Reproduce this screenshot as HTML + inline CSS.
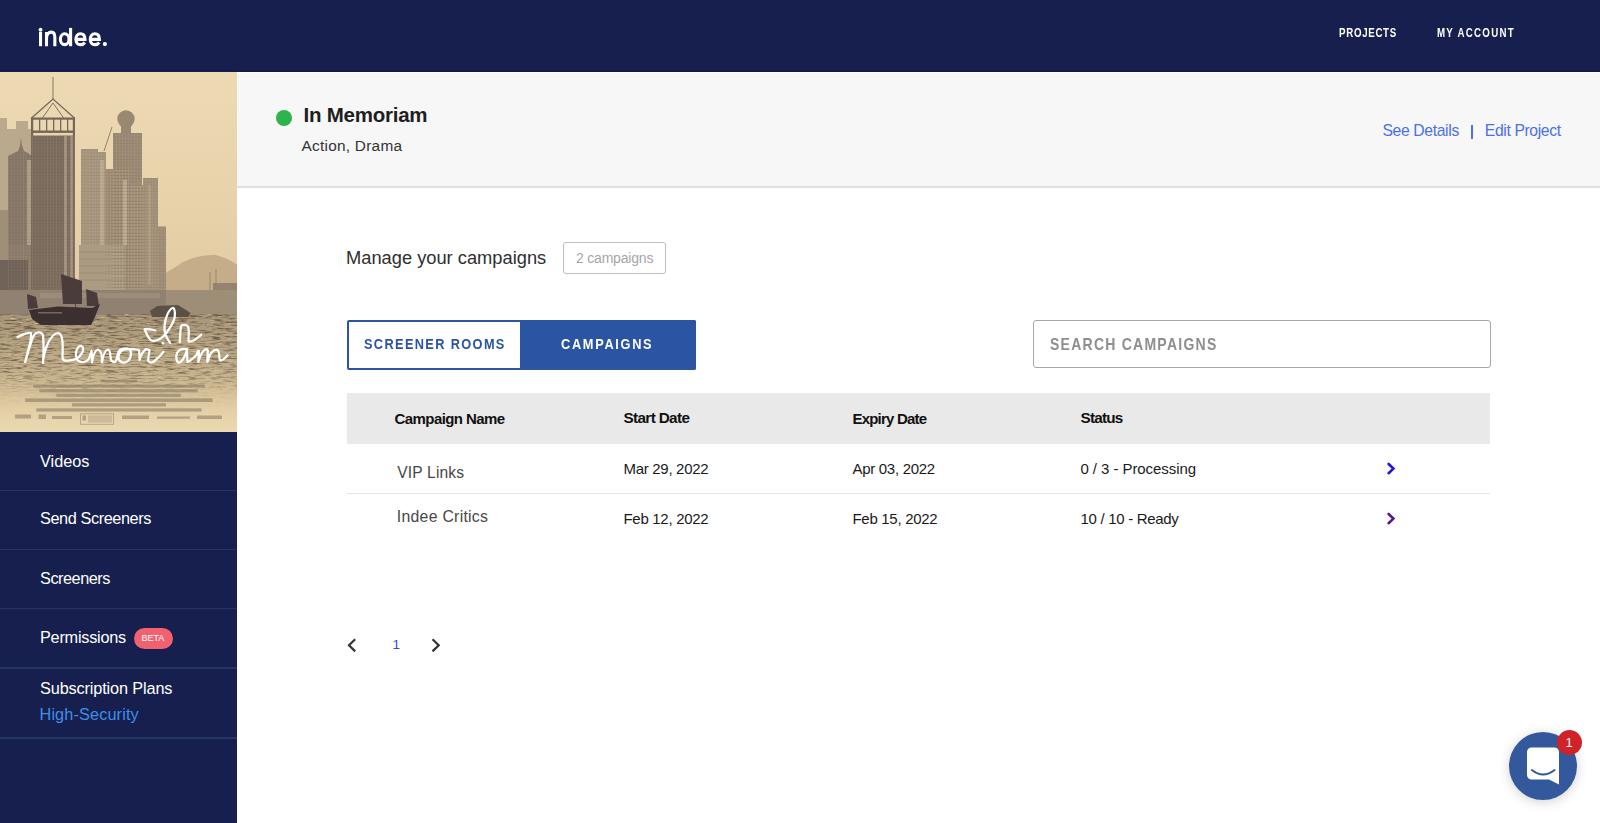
<!DOCTYPE html>
<html><head><meta charset="utf-8"><title>indee</title>
<style>
html,body{margin:0;padding:0;width:1600px;height:823px;overflow:hidden;background:#fff;font-family:"Liberation Sans",sans-serif;}
.t{position:absolute;white-space:nowrap;}
</style></head><body>
<div style="position:absolute;left:0;top:0;width:1600px;height:72px;background:#161f4d"></div>
<div style="position:absolute;left:0;top:70.2px;width:1600px;height:1.6px;background:#111b4a"></div>
<svg style="position:absolute;left:0;top:0" width="120" height="60"><g fill="none" stroke="#fff" stroke-width="3.1"><path d="M40.55 32 V46.2"/><path d="M46.5 46.2 V32 M46.5 38.5 C46.5 34.3 48.8 32.1 51.3 32.1 C53.6 32.1 54.85 34 54.85 37.4 V46.2"/><ellipse cx="64.7" cy="39.2" rx="4.3" ry="5.4"/><path d="M70.6 27.9 V46.2"/><path d="M75.9 39.4 H85 C85 35.5 83.2 33.75 80.45 33.75 C77.6 33.75 75.9 36.2 75.9 39.4 C75.9 42.5 77.7 44.65 80.5 44.65 C82.3 44.65 83.8 43.9 84.8 42.5"/><path d="M90.3 39.4 H99.4 C99.4 35.5 97.6 33.75 94.85 33.75 C92 33.75 90.3 36.2 90.3 39.4 C90.3 42.5 92.1 44.65 94.9 44.65 C96.7 44.65 98.2 43.9 99.2 42.5"/></g><circle cx="40.55" cy="29.7" r="1.95" fill="#fff"/><circle cx="104.9" cy="44.1" r="2.1" fill="#fff"/></svg>
<div class="t" style="left:1339.3px;top:27.06px;font-size:12.8px;line-height:12.8px;color:#fff;font-weight:700;letter-spacing:0.9px;transform:scaleX(0.76);transform-origin:0 0;">PROJECTS</div>
<div class="t" style="left:1436.5px;top:27.16px;font-size:12.8px;line-height:12.8px;color:#fff;font-weight:700;letter-spacing:1.65px;transform:scaleX(0.76);transform-origin:0 0;">MY ACCOUNT</div>
<div style="position:absolute;left:0;top:71px;width:237px;height:752px;background:#161f4d"></div>
<div style="position:absolute;left:0;top:489.5px;width:237px;height:1.5px;background:#253665"></div>
<div style="position:absolute;left:0;top:548.5px;width:237px;height:1.5px;background:#253665"></div>
<div style="position:absolute;left:0;top:607.5px;width:237px;height:1.5px;background:#253665"></div>
<div style="position:absolute;left:0;top:667.0px;width:237px;height:1.5px;background:#253665"></div>
<div style="position:absolute;left:0;top:737.0px;width:237px;height:1.5px;background:#253665"></div>
<div class="t" style="left:40px;top:452.89px;font-size:16.3px;line-height:16.3px;color:#fff;font-weight:400;letter-spacing:0px;">Videos</div>
<div class="t" style="left:40px;top:510.49px;font-size:16.3px;line-height:16.3px;color:#fff;font-weight:400;letter-spacing:-0.41px;">Send Screeners</div>
<div class="t" style="left:40px;top:569.69px;font-size:16.3px;line-height:16.3px;color:#fff;font-weight:400;letter-spacing:-0.475px;">Screeners</div>
<div class="t" style="left:40px;top:628.99px;font-size:16.3px;line-height:16.3px;color:#fff;font-weight:400;letter-spacing:-0.24px;">Permissions</div>
<div style="position:absolute;left:134px;top:628px;width:39px;height:21px;border-radius:10.5px;background:#f1616f"></div>
<div class="t" style="left:141.5px;top:634.38px;font-size:9px;line-height:9px;color:#fff;font-weight:400;letter-spacing:0px;">BETA</div>
<div class="t" style="left:40px;top:680.49px;font-size:16.3px;line-height:16.3px;color:#fff;font-weight:400;letter-spacing:-0.14px;">Subscription Plans</div>
<div class="t" style="left:39.5px;top:706.19px;font-size:16.3px;line-height:16.3px;color:#3f8fe9;font-weight:400;letter-spacing:0.12px;">High-Security</div>
<div style="position:absolute;left:237px;top:72px;width:1363px;height:114px;background:#f7f7f7;border-top:1px solid #fff;box-sizing:border-box"></div>
<div style="position:absolute;left:237px;top:185.5px;width:1363px;height:2px;background:#e0e0e0"></div>
<div style="position:absolute;left:276px;top:109.7px;width:16px;height:16px;border-radius:50%;background:#2db44b"></div>
<div class="t" style="left:303.5px;top:104.94px;font-size:20.5px;line-height:20.5px;color:#1e1e1e;font-weight:700;letter-spacing:-0.24px;">In Memoriam</div>
<div class="t" style="left:301.5px;top:137.76px;font-size:15.4px;line-height:15.4px;color:#333;font-weight:400;letter-spacing:0.25px;">Action, Drama</div>
<div class="t" style="left:1382.5px;top:122.90px;font-size:15.7px;line-height:15.7px;color:#4b70e8;font-weight:400;letter-spacing:-0.35px;">See Details</div>
<div style="position:absolute;left:1471.1px;top:125.2px;width:1.9px;height:13.7px;background:#4b70e8"></div>
<div class="t" style="left:1484.8px;top:122.90px;font-size:15.7px;line-height:15.7px;color:#4b70e8;font-weight:400;letter-spacing:-0.36px;">Edit Project</div>
<div class="t" style="left:346px;top:249.30px;font-size:18.3px;line-height:18.3px;color:#2e2e2e;font-weight:400;letter-spacing:0px;">Manage your campaigns</div>
<div style="position:absolute;left:563px;top:242px;width:103px;height:32px;box-sizing:border-box;border:1.6px solid #bfbfbf;border-radius:3px"></div>
<div class="t" style="left:576px;top:250.94px;font-size:14px;line-height:14px;color:#a6a6a6;font-weight:400;letter-spacing:-0.2px;">2 campaigns</div>
<div style="position:absolute;left:347px;top:320px;width:349px;height:50px;box-sizing:border-box;border:2px solid #2b54a3;border-radius:2px;background:#fff"></div>
<div style="position:absolute;left:520px;top:320px;width:176px;height:50px;background:#2b54a3;border-radius:0 2px 2px 0"></div>
<div class="t" style="left:363.5px;top:337.12px;font-size:14.5px;line-height:14.5px;color:#2b54a3;font-weight:700;letter-spacing:1.55px;transform:scaleX(0.88);transform-origin:0 0;">SCREENER ROOMS</div>
<div class="t" style="left:560.5px;top:337.12px;font-size:14.5px;line-height:14.5px;color:#fff;font-weight:700;letter-spacing:1.92px;transform:scaleX(0.88);transform-origin:0 0;">CAMPAIGNS</div>
<div style="position:absolute;left:1033px;top:320px;width:458px;height:48px;box-sizing:border-box;border:1.5px solid #a8a8a8;border-radius:3px;background:#fff"></div>
<div class="t" style="left:1050.4px;top:335.79px;font-size:16.3px;line-height:16.3px;color:#8e8e8e;font-weight:700;letter-spacing:1.45px;transform:scaleX(0.86);transform-origin:0 0;">SEARCH CAMPAIGNS</div>
<div style="position:absolute;left:347px;top:393px;width:1143px;height:51px;background:#e9e9e9"></div>
<div class="t" style="left:394.5px;top:410.80px;font-size:15px;line-height:15px;color:#111;font-weight:700;letter-spacing:-0.57px;">Campaign Name</div>
<div class="t" style="left:623.5px;top:410.34px;font-size:15.3px;line-height:15.3px;color:#111;font-weight:700;letter-spacing:-0.65px;">Start Date</div>
<div class="t" style="left:852.5px;top:410.60px;font-size:15px;line-height:15px;color:#111;font-weight:700;letter-spacing:-0.8px;">Expiry Date</div>
<div class="t" style="left:1080.5px;top:410.34px;font-size:15.3px;line-height:15.3px;color:#111;font-weight:700;letter-spacing:-0.8px;">Status</div>
<div style="position:absolute;left:347px;top:492.5px;width:1143px;height:1.5px;background:#e5e5e5"></div>
<div class="t" style="left:397.2px;top:464.69px;font-size:15.6px;line-height:15.6px;color:#474747;font-weight:400;letter-spacing:0.17px;">VIP Links</div>
<div class="t" style="left:623.5px;top:460.80px;font-size:15px;line-height:15px;color:#1a1a1a;font-weight:400;letter-spacing:-0.3px;">Mar 29, 2022</div>
<div class="t" style="left:852.5px;top:460.80px;font-size:15px;line-height:15px;color:#1a1a1a;font-weight:400;letter-spacing:-0.3px;">Apr 03, 2022</div>
<div class="t" style="left:1080.5px;top:460.80px;font-size:15px;line-height:15px;color:#1a1a1a;font-weight:400;letter-spacing:-0.07px;">0 / 3 - Processing</div>
<div class="t" style="left:396.8px;top:509.22px;font-size:15.8px;line-height:15.8px;color:#474747;font-weight:400;letter-spacing:0.28px;">Indee Critics</div>
<div class="t" style="left:623.5px;top:510.90px;font-size:15px;line-height:15px;color:#1a1a1a;font-weight:400;letter-spacing:-0.3px;">Feb 12, 2022</div>
<div class="t" style="left:852.5px;top:510.90px;font-size:15px;line-height:15px;color:#1a1a1a;font-weight:400;letter-spacing:-0.3px;">Feb 15, 2022</div>
<div class="t" style="left:1080.5px;top:510.90px;font-size:15px;line-height:15px;color:#1a1a1a;font-weight:400;letter-spacing:-0.3px;">10 / 10 - Ready</div>
<svg style="position:absolute;left:1383px;top:457.5px" width="16" height="20"><path d="M5.6 6 L10.4 10.6 L5.6 15.2" fill="none" stroke="#1f14e0" stroke-width="2.6" stroke-linecap="round" stroke-linejoin="miter"/></svg>
<svg style="position:absolute;left:1383px;top:507.8px" width="16" height="20"><path d="M5.6 6 L10.4 10.6 L5.6 15.2" fill="none" stroke="#551a8b" stroke-width="2.6" stroke-linecap="round" stroke-linejoin="miter"/></svg>
<svg style="position:absolute;left:340px;top:632px" width="110" height="26"><path d="M15.2 7.2 L9 13.2 L15.2 19.4" fill="none" stroke="#333" stroke-width="2.2"/><path d="M92.5 7.2 L98.7 13.2 L92.5 19.4" fill="none" stroke="#333" stroke-width="2.2"/></svg>
<div class="t" style="left:392.5px;top:637.87px;font-size:13.5px;line-height:13.5px;color:#2f4fd8;font-weight:400;letter-spacing:0px;">1</div>
<div style="position:absolute;left:1509px;top:732px;width:68px;height:68px;border-radius:50%;background:#33589b;box-shadow:0 2px 12px rgba(0,0,0,0.18)"></div>
<svg style="position:absolute;left:1509px;top:732px" width="68" height="68"><path d="M22.5 15.5 H45.5 A4.5 4.5 0 0 1 50 20 V52.5 L40 47.5 H22.5 A4.5 4.5 0 0 1 18 43 V20 A4.5 4.5 0 0 1 22.5 15.5Z" fill="#fff"/><path d="M22.8 38 Q34.2 47 45.6 38" fill="none" stroke="#33589b" stroke-width="1.8" stroke-linecap="round"/></svg>
<div style="position:absolute;left:1557px;top:729.5px;width:25px;height:25px;border-radius:50%;background:#d12228"></div>
<div class="t" style="left:1565.5px;top:736.49px;font-size:13px;line-height:13px;color:#fff;font-weight:400;letter-spacing:0px;">1</div>
<div style="position:absolute;left:0;top:72px;width:237px;height:360px;overflow:hidden"><svg width="237" height="360" viewBox="0 72 237 360" style="display:block">
<defs>
<linearGradient id="sky" x1="0" y1="71" x2="0" y2="300" gradientUnits="userSpaceOnUse">
<stop offset="0" stop-color="#eddab3"/><stop offset="0.5" stop-color="#e8d3ab"/><stop offset="1" stop-color="#e2cba3"/>
</linearGradient>
<linearGradient id="water" x1="0" y1="314" x2="0" y2="432" gradientUnits="userSpaceOnUse">
<stop offset="0" stop-color="#a99679"/><stop offset="0.3" stop-color="#b9a683"/><stop offset="0.55" stop-color="#c9b58e"/><stop offset="0.72" stop-color="#dcc79e"/><stop offset="0.85" stop-color="#e6d2a9"/><stop offset="1" stop-color="#ebd9b1"/>
</linearGradient>
<filter id="noise" x="0" y="310" width="237" height="125" filterUnits="userSpaceOnUse" color-interpolation-filters="sRGB">
<feTurbulence type="fractalNoise" baseFrequency="0.085 0.6" numOctaves="3" seed="7" result="t"/>
<feColorMatrix in="t" type="matrix" values="0 0 0 0 0.40  0 0 0 0 0.34  0 0 0 0 0.27  3.0 0 0 0 -1.38"/>
</filter>
<filter id="noise2" x="0" y="310" width="237" height="125" filterUnits="userSpaceOnUse" color-interpolation-filters="sRGB">
<feTurbulence type="fractalNoise" baseFrequency="0.12 0.7" numOctaves="2" seed="11" result="t"/>
<feColorMatrix in="t" type="matrix" values="0 0 0 0 0.93  0 0 0 0 0.86  0 0 0 0 0.72  -2.6 0 0 0 0.95"/>
</filter>
<linearGradient id="fade" x1="0" y1="314" x2="0" y2="432" gradientUnits="userSpaceOnUse">
<stop offset="0" stop-color="#fff" stop-opacity="1"/><stop offset="0.45" stop-color="#fff" stop-opacity="0.85"/><stop offset="0.68" stop-color="#fff" stop-opacity="0.1"/><stop offset="0.8" stop-color="#fff" stop-opacity="0"/>
</linearGradient>
<mask id="wm"><rect x="0" y="314" width="237" height="118" fill="url(#fade)"/></mask>
<pattern id="win" x="0" y="0" width="3" height="3.2" patternUnits="userSpaceOnUse">
<rect x="0" y="2.2" width="3" height="1" fill="#5e5044" opacity="0.14"/><rect x="2.2" y="0" width="0.8" height="3.2" fill="#e8d8b8" opacity="0.08"/>
</pattern>
</defs>
<rect x="0" y="71" width="237" height="361" fill="url(#sky)"/>
<!-- mountain -->
<path d="M163 276 L167 272 L175 267.5 L183 262 L193 258 L203 255.8 L214.8 254.8 L225 258 L231 261 L237 264.4 V318 H163Z" fill="#c6ad89"/>
<!-- far hazy left block -->
<path d="M0 118 H7 V129 H16 V121 H28 V129 H32 V318 H0Z" fill="#bba98e"/>
<!-- spired building -->
<path d="M8 156 L14 153 L18 151 L20 146 L21 137.5 L22 146 L24 151 L28 153 L32 156 V318 H8Z" fill="#87786a"/>
<rect x="27" y="160" width="5" height="85" fill="#b3a289" opacity="0.9"/><rect x="8" y="245" width="27" height="50" fill="#8d7d6a"/>
<!-- main tower crown lattice -->
<path d="M31 118.5 L53 99 L75 118.5" fill="none" stroke="#76675a" stroke-width="1.3"/>
<path d="M42 118.5 L53 103 L64 118.5" fill="none" stroke="#76675a" stroke-width="0.9"/>
<line x1="53" y1="77" x2="53" y2="100" stroke="#7b6c5e" stroke-width="0.9"/>
<rect x="31" y="117.5" width="44" height="2.2" fill="#76675a"/>
<rect x="31" y="130.5" width="44" height="2.4" fill="#76675a"/>
<rect x="31" y="118" width="2.2" height="18" fill="#76675a"/>
<rect x="72.8" y="118" width="2.2" height="18" fill="#76675a"/>
<rect x="39" y="118" width="1.3" height="14" fill="#76675a"/>
<rect x="46" y="118" width="1.3" height="14" fill="#76675a"/>
<rect x="53" y="118" width="1.3" height="14" fill="#76675a"/>
<rect x="60" y="118" width="1.3" height="14" fill="#76675a"/>
<rect x="67" y="118" width="1.3" height="14" fill="#76675a"/>
<rect x="31" y="135.5" width="44" height="183" fill="#7c6c5e"/>
<rect x="64" y="136" width="3" height="150" fill="#b0a088" opacity="0.75"/>
<rect x="70" y="136" width="3" height="150" fill="#b0a088" opacity="0.65"/>
<!-- crane -->
<line x1="104" y1="151" x2="112" y2="127" stroke="#8a7a66" stroke-width="0.9"/>
<!-- building middle -->
<path d="M81 149 H98 V152 H106 V318 H81Z" fill="#a8977e"/>
<rect x="100" y="160" width="4" height="85" fill="#c1af93" opacity="0.8"/>
<!-- ball building -->
<circle cx="126" cy="119" r="8.7" fill="#9a8872"/>
<rect x="121" y="124" width="10" height="10" fill="#9a8872"/>
<rect x="113" y="133" width="29" height="185" fill="#9c8a74"/>
<!-- right buildings -->
<rect x="106" y="169" width="24" height="150" fill="#a08e77"/>
<path d="M130 185 H143 V178 H158 V318 H130Z" fill="#a39179"/>
<rect x="123" y="180" width="4" height="65" fill="#c3b196" opacity="0.85"/>
<rect x="148" y="185" width="3" height="100" fill="#b8a78c" opacity="0.6"/>
<rect x="158" y="226.5" width="8" height="92" fill="#a08e77"/>
<!-- lower windowed building -->
<rect x="79" y="245" width="46" height="48" fill="#ab9b83"/>
<g stroke="#968670" stroke-width="0.8" opacity="0.8">
<line x1="79" y1="252" x2="125" y2="252"/><line x1="79" y1="259" x2="125" y2="259"/><line x1="79" y1="266" x2="125" y2="266"/><line x1="79" y1="273" x2="125" y2="273"/><line x1="79" y1="280" x2="125" y2="280"/>
</g>
<!-- left lower -->
<rect x="0" y="210" width="8" height="50" fill="#a08f78"/>

<rect x="0" y="260" width="28" height="55" fill="#706357"/>
<!-- right low structures -->
<rect x="213" y="283" width="24" height="20" fill="#958370"/>
<line x1="210" y1="272" x2="210" y2="290" stroke="#8f7e6b" stroke-width="0.8"/>
<line x1="216" y1="269" x2="216" y2="290" stroke="#8f7e6b" stroke-width="0.8"/>
<g fill="url(#win)">
<rect x="31" y="136" width="44" height="154"/>
<path d="M81 149 H98 V152 H106 V245 H81Z"/>
<rect x="113" y="133" width="29" height="157"/>
<rect x="106" y="169" width="24" height="121"/>
<path d="M130 185 H143 V178 H158 V290 H130Z"/>
<rect x="158" y="226.5" width="8" height="64"/>
<path d="M8 156 L14 153 L18 151 L24 151 L28 153 L32 156 V290 H8Z"/>
</g>
<!-- waterfront -->
<rect x="0" y="290" width="166" height="26" fill="#908170"/>
<rect x="166" y="290" width="71" height="26" fill="#9e8d77"/>
<rect x="40" y="293" width="120" height="5" fill="#a39482" opacity="0.6"/>
<!-- water -->
<rect x="0" y="315" width="237" height="117" fill="url(#water)"/>
<g mask="url(#wm)"><rect x="0" y="315" width="237" height="117" filter="url(#noise)"/><rect x="0" y="315" width="237" height="117" filter="url(#noise2)"/></g>
<!-- boat -->
<path d="M61 274 L82 281 L82 304 L63 304Z" fill="#4a3c3b"/>
<path d="M27 294 L36 297 L38 308 L28 309Z" fill="#4a3c3b"/>
<path d="M86 289 L97 293 L99 306 L87 306Z" fill="#4a3c3b"/>
<line x1="75" y1="300" x2="76" y2="312" stroke="#4a3c3b" stroke-width="0.8"/>
<path d="M29 310 L58 306.5 L92 308 L100 304 L95 317 L91 325 L41 325 L32 319Z" fill="#3b302f"/>
<rect x="38" y="312" width="24" height="1.5" fill="#9a8d80" opacity="0.6"/>
<path d="M150 311 L157 306 L178 305 L186 310 L190.5 313 L188 317 L152 317Z" fill="#5c4f46"/>
<!-- credits -->
<g fill="#7d6e5c" opacity="0.5">
<rect x="100.7" y="380" width="36.3" height="2.4"/>
<rect x="33.3" y="384.6" width="171.7" height="3"/>
<rect x="39.3" y="389.2" width="158.5" height="3.2"/>
<rect x="56.3" y="393.8" width="124.4" height="3.1"/>
<rect x="25.2" y="398.4" width="187.4" height="3.6"/>
<rect x="71.9" y="403.2" width="94.1" height="3.3"/>
<rect x="36.3" y="408.3" width="165.2" height="3.3"/>
</g>
<g fill="#7d6e5c" opacity="0.5">
<rect x="15" y="414.5" width="16" height="4"/><rect x="38.5" y="414.5" width="7.5" height="4.5"/><rect x="52" y="416" width="20" height="3"/>
<rect x="80.5" y="413.8" width="33" height="10.5" fill="none" stroke="#7d6e5c" stroke-width="0.9"/>
<rect x="82.5" y="415.5" width="3.5" height="5"/><rect x="88" y="415.5" width="24" height="7" opacity="0.5"/>
<rect x="122" y="415.5" width="27" height="3.5"/><rect x="157" y="416.5" width="33" height="2.2"/><rect x="197" y="415.5" width="25" height="3.5"/>
</g>
<!-- script -->
<g fill="none" stroke="#fff" stroke-width="2.25" stroke-linecap="round" stroke-linejoin="round">
<path d="M17.5 337 C22 335 27 332 31 333 C32 340 27.5 352 25.2 362 C28 352 31 341 34 335 C36 332 41 331 43 335 C44 345 43.5 355 43 363 C44 350 50 334 58 333 C63 333 63 345 62.5 356 C62 362 66 361 73 360 C76 359 81 356 83 351 C84 347.5 82 345.5 80 346 C77 347 75.5 352 76 356 C76.5 361 80 362.5 84 362 C86 361.5 87.5 360.5 88.5 359.5 C89.5 357 91 354 91.5 351 C92 355 92 359 92 362.5 C93 356 95 350 98 349.5 C101 350 102 357 102 362 C103 356 105 350 108 349.5 C111 350 110 357 111 360 C112 362 113 362 115 362 C117 361 117 356 118 353 C119 349 124 348 128 348.5 C132 349.5 132 357 128 361 C125 363.5 119 363 118.5 358 C118 354 121 350 125 349.5 C130 349 135 349 139 350 C139.5 353 139.5 357 139.5 360 C141 355 143 351 146 349 C147 349 148.5 349 149.5 350.3 C149 354 148 358 148.2 361 C149.5 363 152 363 154.5 361 C157 359 161 355 163.4 352"/>
<path d="M187 349.5 C184 348 179 349 177 353 C175.5 357 176.5 362.5 179 362.5 C182 362.5 185.5 356 187 349.2 C187 353 187 358 187.6 362 C190 361 194 357.5 197 354.5 C197 351 199 350 199 351 C199 355 198.5 359 198.3 362 C200 356 203 349 206.7 349 C209 349 207 357 207.4 362 C209 356 212 350 216.5 349.7 C220 350 219 357 219.7 360 C221 362 225 358 227.5 355.5"/>
<path d="M155.3 330.5 C152 329.6 147 328.8 144.6 329.2 C146 332 147.5 337.5 151 340.2 C155 342 159 340 163 336.7 C168 332 174 322 174.7 316.8 C175.5 311 174 307.5 172.7 308 C169 309 165 318 164.5 326 C164 333 167 339 170 342.8"/>
<path d="M179.8 342.3 C180 336 180.5 330 181 326 C182.5 324.5 186 324.5 188 326.5 C189.5 330 188.5 337 188.5 341.3 C191 342.5 196 339.5 201.3 334.6"/>
</g>
<circle cx="162.9" cy="343.3" r="1.25" fill="#fff"/>
</svg>
</div>
</body></html>
